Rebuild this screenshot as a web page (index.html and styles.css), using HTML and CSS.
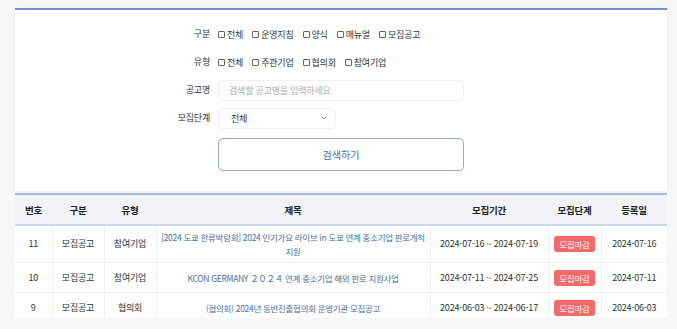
FILE: index.html
```html
<!DOCTYPE html>
<html lang="ko">
<head>
    <meta charset="UTF-8">
    <title>모집공고</title>
    <link rel="stylesheet" href="styles.css">
</head>
<body>

    <!-- Search Form -->
    <div class="search-card">
        <div class="search-grid">
            <div class="label">구분</div>
            <div class="checks">
                <label><span class="box"></span>전체</label>
                <label><span class="box"></span>운영지침</label>
                <label><span class="box"></span>양식</label>
                <label><span class="box"></span>매뉴얼</label>
                <label><span class="box"></span>모집공고</label>
            </div>

            <div class="label">유형</div>
            <div class="checks">
                <label><span class="box"></span>전체</label>
                <label><span class="box"></span>주관기업</label>
                <label><span class="box"></span>협의회</label>
                <label><span class="box"></span>참여기업</label>
            </div>

            <div class="label">공고명</div>
            <div class="field text-field">검색할 공고명을 입력하세요</div>

            <div class="label">모집단계</div>
            <div class="field select-field">
                <span>전체</span>
                <svg width="6" height="4" viewBox="0 0 6 4"><path d="M0.8 0.8 L3 3 L5.2 0.8" fill="none" stroke="#777" stroke-width="0.9"/></svg>
            </div>

            <div></div>
            <button class="search-btn">검색하기</button>
        </div>
    </div>

    <!-- Result Table -->
    <div class="table-wrap">
        <table class="board">
            <colgroup>
                <col style="width: 37px">
                <col style="width: 52px">
                <col style="width: 52px">
                <col style="width: 274px">
                <col style="width: 118px">
                <col style="width: 53px">
                <col style="width: 66px">
            </colgroup>
            <thead>
                <tr>
                    <th>번호</th>
                    <th>구분</th>
                    <th>유형</th>
                    <th>제목</th>
                    <th>모집기간</th>
                    <th>모집단계</th>
                    <th>등록일</th>
                </tr>
            </thead>
            <tbody>
                <tr>
                    <td>11</td>
                    <td>모집공고</td>
                    <td>참여기업</td>
                    <td class="title">[2024 도쿄 한류박람회] 2024 인기가요 라이브 in 도쿄 연계 중소기업 판로개척 지원</td>
                    <td>2024-07-16 ~ 2024-07-19</td>
                    <td><span class="badge">모집마감</span></td>
                    <td>2024-07-16</td>
                </tr>
                <tr>
                    <td>10</td>
                    <td>모집공고</td>
                    <td>참여기업</td>
                    <td class="title">KCON GERMANY ２０２４ 연계 중소기업 해외 판로 지원사업</td>
                    <td>2024-07-11 ~ 2024-07-25</td>
                    <td><span class="badge">모집마감</span></td>
                    <td>2024-07-11</td>
                </tr>
                <tr>
                    <td>9</td>
                    <td>모집공고</td>
                    <td>협의회</td>
                    <td class="title">(협의회) 2024년 동반진출협의회 운영기관 모집공고</td>
                    <td>2024-06-03 ~ 2024-06-17</td>
                    <td><span class="badge">모집마감</span></td>
                    <td>2024-06-03</td>
                </tr>
            </tbody>
        </table>
    </div>

</body>
</html>
```

FILE: styles.css
```css
/* Global */
body {
    margin: 0;
    padding: 8px 10px 0 15px;
    background: #f6f7f9;
    font-family: 'Noto Sans CJK KR', 'Noto Sans', sans-serif;
    font-size: 9px;
    letter-spacing: -0.2px;
    color: #333;
    overflow: hidden;
}

/* Search card */
.search-card {
    background: #fff;
    border-top: 2px solid #6f8fcf;
    box-shadow: 0 1px 6px rgba(0, 0, 0, 0.06);
    padding: 13px 15px 20px;
}

.search-grid {
    display: grid;
    grid-template-columns: 180px 246px;
    column-gap: 8px;
    row-gap: 6px;
    align-items: center;
}

.label {
    text-align: right;
    height: 22px;
    line-height: 22px;
    color: #333;
}

.checks {
    display: flex;
    gap: 9px;
    white-space: nowrap;
}

.checks label {
    display: flex;
    align-items: center;
}

.box {
    width: 5px;
    height: 5px;
    border: 1px solid #666;
    border-radius: 1px;
    margin-right: 2px;
}

.field {
    height: 21px;
    box-sizing: border-box;
    border: 1px solid #eef0f3;
    border-radius: 5px;
    display: flex;
    align-items: center;
    padding: 0 10px;
}

.text-field {
    color: #aaa;
}

.select-field {
    width: 118px;
    justify-content: space-between;
    padding: 0 8px 0 12px;
}

.search-btn {
    margin-top: 3px;
    height: 33px;
    background: #fff;
    border: 1px solid #9aacc4;
    border-radius: 5px;
    color: #4a6fa5;
    font-family: inherit;
    font-size: 10px;
}

/* Table */
.table-wrap {
    margin-top: 2px;
    height: 125px;
    overflow: hidden;
}

.board {
    width: 100%;
    table-layout: fixed;
    border-collapse: collapse;
    background: #fff;
    border-top: 2px solid #a9b8d2;
}

.board th {
    background: #f1f3f7;
    height: 29px;
    padding: 0;
    font-weight: bold;
    font-size: 9.5px;
    color: #222;
    border-bottom: 2px solid #cfd8e8;
}

.board td {
    text-align: center;
    border-right: 1px solid #f0f0f0;
    border-bottom: 1px solid #f0f0f0;
    padding: 4px 2px;
    height: 21px;
    line-height: 14px;
    color: #333;
    white-space: nowrap;
}

.board td:last-child {
    border-right: none;
}

.board td.title {
    color: #4a6f9c;
    white-space: normal;
    word-break: keep-all;
    font-size: 8.5px;
    letter-spacing: -0.3px;
    padding: 4px 4px;
}

.badge {
    display: inline-block;
    background: #f16a6a;
    color: #fff;
    border-radius: 3px;
    padding: 2px 5px;
    font-size: 8.5px;
    line-height: 12px;
}
```
